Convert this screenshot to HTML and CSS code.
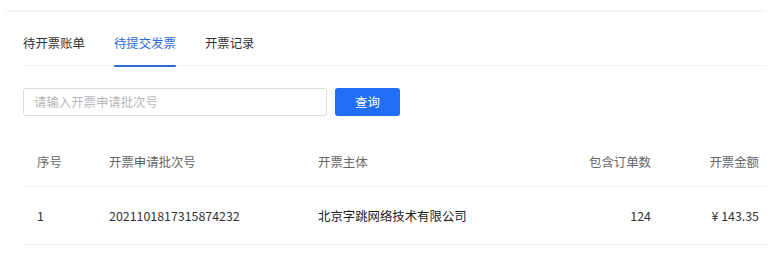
FILE: index.html
```html
<!DOCTYPE html>
<html lang="zh-CN">
<head>
<meta charset="utf-8">
<title>待提交发票</title>
<link rel="stylesheet" href="styles.css">
</head>
<body>
<div class="topbar"></div>
<div class="content">
  <div class="tabs">
    <div class="tab">待开票账单</div>
    <div class="tab active">待提交发票</div>
    <div class="tab">开票记录</div>
  </div>
  <div class="search">
    <input class="search-input" type="text" placeholder="请输入开票申请批次号">
    <button class="search-btn">查询</button>
  </div>
  <div class="table">
    <div class="row head">
      <div class="cell">序号</div>
      <div class="cell">开票申请批次号</div>
      <div class="cell">开票主体</div>
      <div class="cell right">包含订单数</div>
      <div class="cell right last">开票金额</div>
    </div>
    <div class="row body-row">
      <div class="cell">1</div>
      <div class="cell">2021101817315874232</div>
      <div class="cell strong">北京字跳网络技术有限公司</div>
      <div class="cell right">124</div>
      <div class="cell right last">¥ 143.35</div>
    </div>
  </div>
</div>
</body>
</html>
```
FILE: styles.css
```css
html, body {
  margin: 0;
  padding: 0;
  background: #fff;
}
body {
  font-family: "Noto Sans CJK SC", "Noto Sans", sans-serif;
  font-size: 12.4px;
  color: #333;
}
.topbar {
  height: 10px;
  width: 760px;
  margin-left: 6px;
  border-bottom: 2px solid #f4f4f4;
}
.content {
  margin-left: 23px;
  width: 743px;
}
.tabs {
  display: flex;
  gap: 29px;
  height: 53px;
  border-bottom: 1px solid #efefef;
}
.tab {
  position: relative;
  padding-top: 21px;
  line-height: 20px;
  color: #333;
}
.tab.active {
  color: #2f6bd4;
}
.tab.active::after {
  content: "";
  position: absolute;
  left: 0;
  right: 0;
  bottom: -2px;
  height: 2px;
  background: #2b6cdb;
  border-radius: 1px;
}
.search {
  display: flex;
  gap: 8px;
  margin-top: 22px;
}
.search-input {
  box-sizing: border-box;
  width: 304px;
  height: 28px;
  border: 1px solid #dcdcdc;
  border-radius: 3px;
  padding: 0 10px;
  font-family: inherit;
  font-size: 12.4px;
  color: #333;
  outline: none;
}
.search-input::placeholder {
  color: #b8b8b8;
}
.search-btn {
  width: 65px;
  height: 28px;
  border: none;
  border-radius: 3px;
  background: #1f6ef5;
  color: #fff;
  font-family: inherit;
  font-size: 12.4px;
  padding: 0;
}
.table {
  margin-top: 22px;
}
.row {
  display: grid;
  grid-template-columns: 72px 209px 1fr 100px 101px;
  align-items: center;
  border-bottom: 1px solid #efefef;
}
.row.head {
  height: 48px;
  color: #666;
}
.row.body-row {
  height: 57px;
  color: #333;
}
.cell {
  padding: 0 14px;
  white-space: nowrap;
}
.cell.right {
  text-align: right;
}
.cell.last {
  padding-right: 7px;
}
.cell.strong {
  color: #222;
}
```
